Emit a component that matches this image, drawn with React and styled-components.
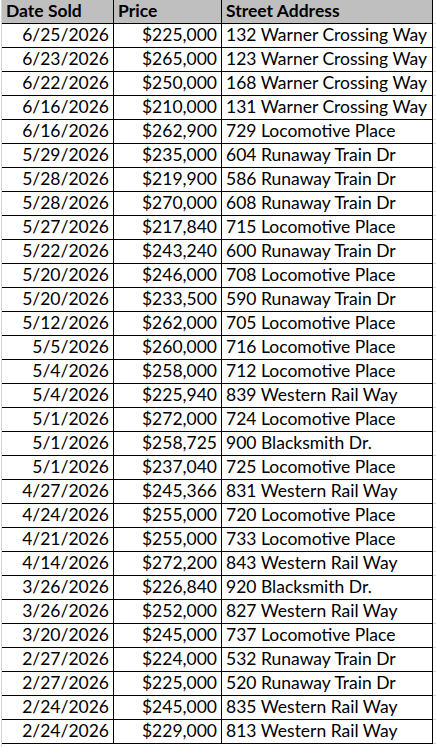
import styled, { createGlobalStyle } from 'styled-components';

const sales = [
  ['6/25/2026', '$225,000', '132 Warner Crossing Way'],
  ['6/23/2026', '$265,000', '123 Warner Crossing Way'],
  ['6/22/2026', '$250,000', '168 Warner Crossing Way'],
  ['6/16/2026', '$210,000', '131 Warner Crossing Way'],
  ['6/16/2026', '$262,900', '729 Locomotive Place'],
  ['5/29/2026', '$235,000', '604 Runaway Train Dr'],
  ['5/28/2026', '$219,900', '586 Runaway Train Dr'],
  ['5/28/2026', '$270,000', '608 Runaway Train Dr'],
  ['5/27/2026', '$217,840', '715 Locomotive Place'],
  ['5/22/2026', '$243,240', '600 Runaway Train Dr'],
  ['5/20/2026', '$246,000', '708 Locomotive Place'],
  ['5/20/2026', '$233,500', '590 Runaway Train Dr'],
  ['5/12/2026', '$262,000', '705 Locomotive Place'],
  ['5/5/2026', '$260,000', '716 Locomotive Place'],
  ['5/4/2026', '$258,000', '712 Locomotive Place'],
  ['5/4/2026', '$225,940', '839 Western Rail Way'],
  ['5/1/2026', '$272,000', '724 Locomotive Place'],
  ['5/1/2026', '$258,725', '900 Blacksmith Dr.'],
  ['5/1/2026', '$237,040', '725 Locomotive Place'],
  ['4/27/2026', '$245,366', '831 Western Rail Way'],
  ['4/24/2026', '$255,000', '720 Locomotive Place'],
  ['4/21/2026', '$255,000', '733 Locomotive Place'],
  ['4/14/2026', '$272,200', '843 Western Rail Way'],
  ['3/26/2026', '$226,840', '920 Blacksmith Dr.'],
  ['3/26/2026', '$252,000', '827 Western Rail Way'],
  ['3/20/2026', '$245,000', '737 Locomotive Place'],
  ['2/27/2026', '$224,000', '532 Runaway Train Dr'],
  ['2/27/2026', '$225,000', '520 Runaway Train Dr'],
  ['2/24/2026', '$245,000', '835 Western Rail Way'],
  ['2/24/2026', '$229,000', '813 Western Rail Way'],
];

const GlobalStyle = createGlobalStyle`
  html, body {
    margin: 0;
    padding: 0;
    background: #fff;
  }
  body {
    font-family: Lato, "Open Sans", sans-serif;
    color: #000;
  }
`;

const Sheet = styled.div`
  margin-left: 1px;
  border-left: 1px solid #d4d4d4;
  width: 434px;
  height: 747px;
  overflow: hidden;
`;

const Row = styled.div`
  display: grid;
  grid-template-columns: 112px 108px 211px 3px;
  height: 24px;
  background: ${(p) => (p.$header ? '#bfbfbf' : '#fff')};
`;

const Cell = styled.div`
  box-sizing: border-box;
  border-right: 1px solid #000;
  border-bottom: 1px solid #000;
  display: flex;
  align-items: flex-end;
  justify-content: ${(p) => (p.$align === 'right' ? 'flex-end' : 'flex-start')};
  padding: 0 4px 2px 4px;
  font-size: 17.5px;
  line-height: 20px;
  font-weight: ${(p) => (p.$bold ? 700 : 400)};
  white-space: nowrap;
  overflow: hidden;
`;

const Gap = styled.div`
  border-bottom: 1px solid #d4d4d4;
  background: #fff;
`;

export default function App() {
  return (
    <>
      <GlobalStyle />
      <Sheet>
        <Row $header>
          <Cell $bold>Date Sold</Cell>
          <Cell $bold>Price</Cell>
          <Cell $bold>Street Address</Cell>
          <Gap />
        </Row>
        {sales.map(([date, price, address], i) => (
          <Row key={i}>
            <Cell $align='right'>{date}</Cell>
            <Cell $align='right'>{price}</Cell>
            <Cell>{address}</Cell>
            <Gap />
          </Row>
        ))}
      </Sheet>
    </>
  );
}
